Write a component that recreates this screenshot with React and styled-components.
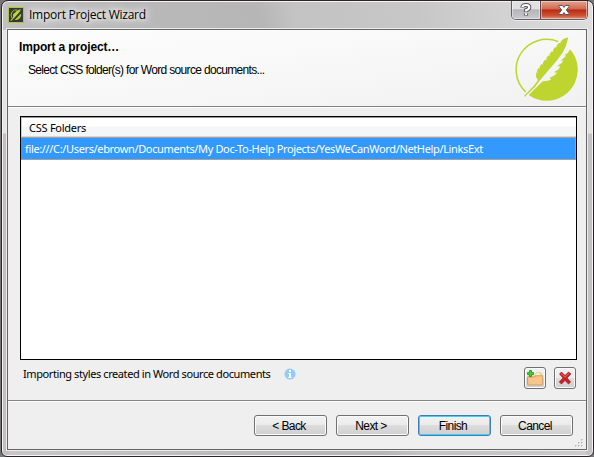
import React from "react";
import styled, { createGlobalStyle, css } from "styled-components";

const GlobalStyle = createGlobalStyle`
  * { box-sizing: border-box; }
  body { margin: 0; background: #777; overflow: hidden; }
`;

const Window = styled.main`
  width: 593px;
  height: 457px;
  padding: 0 5px 6px 5px;
  margin-left: 1px;
  display: flex;
  flex-direction: column;
  border: 1px solid #292529;
  border-radius: 7px 7px 6px 6px;
  box-shadow: inset 0 0 0 1px #f5f3f3;
  background:
    linear-gradient(180deg, #e7e4e4 0 103px, #c3bfbf 104px 100%) 0 29px / 7px 100% no-repeat,
    linear-gradient(180deg, #e5e3e3 0 103px, #c3c1c1 104px 100%) 100% 29px / 7px 100% no-repeat,
    linear-gradient(74deg, #c6c6c6 0 5%, #b9b9b9 35%, #b6b6b6 53%, #c3c3c3 58%, #c7c7c7 75%, #dedede 100%);
  font: 11px/14px "Noto Sans", sans-serif;
  color: #000;
`;

const TitleBar = styled.header`
  height: 28px;
  flex: none;
  display: flex;
  align-items: flex-start;
`;

const Title = styled.h1`
  margin: 4px 0 0 5px;
  font: 12px/20px "Open Sans", sans-serif;
  letter-spacing: -0.26px;
  text-shadow: 0 0 5px #fff, 0 0 9px #fff, 0 0 12px #fff;
`;

const AppIcon = styled.svg`
  width: 16px;
  height: 16px;
  margin: 6px 0 0 1px;
  flex: none;
`;

const Controls = styled.div`
  display: flex;
  margin-left: auto;
  height: 19px;
  border: 1px solid #625f64;
  border-top: 0;
  border-radius: 0 0 5px 5px;
  box-shadow: 0 1px 0 #eee;
  overflow: hidden;
`;

const Control = styled.button`
  width: ${({ $close }) => ($close ? 47 : 28)}px;
  height: 18px;
  padding: 0;
  border: 0;
  display: grid;
  place-items: center;
  box-shadow: inset 0 0 0 1px #ffffff70;
  background: linear-gradient(#e1e0e1 0 45%, #b5b4b7 48%, #cacacd);
  ${({ $close }) => $close && css`
    border-left: 1px solid #69404a;
    background: linear-gradient(#e3a38f 0, #d2674e 45%, #ba2b14 49%, #cc5031 80%, #df947a);
  `}
`;

const Client = styled.section`
  height: 421px;
  width: 580px;
  display: flex;
  flex-direction: column;
  border: 1px solid #656565;
  outline: 1px solid #eeeded;
  background: #efefef;
`;

const Intro = styled.div`
  height: 77px;
  flex: none;
  display: flex;
  justify-content: space-between;
  border-bottom: 1px solid #848484;
  background: linear-gradient(172deg, #fdfdfd, #f9f9f9 40%, #f1f1f1);
  font-family: "Liberation Sans", sans-serif;
`;

const IntroText = styled.div`padding: 10px 0 0 11px;`;

const Heading = styled.h2`
  margin: 0;
  font: bold 12px/14px "Liberation Sans", sans-serif;
  letter-spacing: -0.15px;
`;

const Description = styled.p`
  margin: 9px 0 0 9px;
  font-size: 12px;
  line-height: 14px;
  letter-spacing: -0.68px;
  word-spacing: 0.1px;
`;

const Logo = styled.svg`
  width: 72px;
  height: 72px;
  margin: 3px 4px 0 0;
`;

const Body = styled.div`
  height: 294px;
  flex: none;
  padding: 8px 10px 0 12px;
  border-top: 1px solid #fff;
  border-bottom: 1px solid #858585;
`;

const FolderList = styled.div`
  width: 557px;
  height: 244px;
  border: 1px solid #000;
  background: #fff;
`;

const ListHeader = styled.div`
  height: 20px;
  padding: 3px 0 0 7px;
  border-top: 1px solid #999;
  border-left: 1px solid #ccc;
  border-bottom: 1px solid #d5d5d5;
  background: linear-gradient(#fff 0 8px, #f5f6f7 9px);
  letter-spacing: -0.25px;
  line-height: 13px;
`;

const FolderRow = styled.div`
  height: 23px;
  padding: 4px 0 0 4px;
  border: 1px solid #a5a29d;
  border-width: 1px 1px 1px 0;
  background: #3399ff;
  color: #fff;
  letter-spacing: -0.35px;
  white-space: nowrap;
`;

const Tools = styled.div`
  display: flex;
  align-items: flex-start;
  width: 557px;
  padding: 7px 1px 0 3px;
`;

const Status = styled.span`
  line-height: 14px;
  letter-spacing: -0.41px;
  white-space: nowrap;
`;

const Info = styled.svg`
  width: 12px;
  height: 12px;
  margin: 1px 0 0 14px;
  flex: none;
`;

const ToolButtons = styled.div`
  margin-left: auto;
  display: flex;
  gap: 8px;
`;

const buttonFace = css`
  padding: 0;
  border: 1px solid #707070;
  border-radius: 3px;
  box-shadow: inset 0 0 0 1px #fbfbfb;
  background: linear-gradient(#f2f2f2, #ebebeb 48%, #dddddd 50%, #cfcfcf);
`;

const ToolButton = styled.button`
  ${buttonFace}
  width: 22px;
  height: 22px;
  display: grid;
  place-items: center;
`;

const Footer = styled.footer`
  height: 48px;
  flex: none;
  position: relative;
  display: flex;
  justify-content: flex-end;
  gap: 9px;
  padding: 13px 13px 0 0;
  border-top: 1px solid #fff;
`;

const WizardButton = styled.button`
  ${buttonFace}
  width: 73px;
  height: 21px;
  padding: 1px 3px 0 0;
  font: 12px/17px "Liberation Sans", sans-serif;
  letter-spacing: -0.6px;
  ${({ $primary }) => $primary && css`
    border-color: #3c7fb1;
    box-shadow: inset 0 0 0 1px #43cff5;
  `}
`;

const Grip = styled.svg`
  position: absolute;
  right: 2px;
  bottom: 1px;
  width: 10px;
  height: 10px;
`;

const gripDots = [[7, 1], [4, 4], [7, 4], [1, 7], [4, 7], [7, 7]];
const actions = [
  { label: "< Back" },
  { label: "Next >" },
  { label: "Finish", primary: true },
  { label: "Cancel" },
];

export default function App() {
  return (
    <>
      <GlobalStyle />
      <Window>
        <TitleBar>
          <AppIcon viewBox="0 0 16 16">
            <path fill="#35383a" stroke="#b0c52f" d="M.5.5h15v15H.5z" />
            <path fill="none" stroke="#a9bd2f" d="M9.5 3A5.2 5.2 0 0 0 4 11" />
            <path fill="#b5cc32" d="M13 6.4A5.5 5.5 0 0 1 6.6 13Z" />
            <path fill="#c3d93a" d="M13 2 11.5 5 8 9 3 14l-.6-.6L5.2 10l-.2-2.5L9 3.8Z" />
          </AppIcon>
          <Title>Import Project Wizard</Title>
          <Controls>
            <Control aria-label="Help">
              <svg width="12" height="16" viewBox="0 0 12 16" fill="none">
                <path stroke="#54545d" strokeWidth="4.2" d="M2.5 5.5V5Q2.5 3 6 3t3.2 2.4Q9.2 7 6 8.3V10M6 11.5v2" />
                <path stroke="#fff" strokeWidth="2.2" d="M2.5 5V4.8Q2.5 3 6 3t3.2 2.4Q9.2 7 6 8.3V9.5M6 11.3v1.6" />
              </svg>
            </Control>
            <Control $close aria-label="Close">
              <svg width="12" height="12" viewBox="0 0 12 12">
                <path fill="#fff" stroke="#575463" d="M1 1.5h3.5L6 3.4l1.5-1.9H11v1L8.3 6l2.7 3.5v1H7.5L6 8.6l-1.5 1.9H1v-1L3.7 6 1 2.5z" />
              </svg>
            </Control>
          </Controls>
        </TitleBar>
        <Client>
          <Intro>
            <IntroText>
              <Heading>Import a project…</Heading>
              <Description>Select CSS folder(s) for Word source documents...</Description>
            </IntroText>
            <Logo viewBox="0 0 216 216">
              <path fill="none" stroke="#bed52f" strokeWidth="4.5" d="M145 26A91.5 91.5 0 0 0 47 177" />
              <path fill="#bed52f" d="M180 49A93 93 0 0 1 110.5 203.5A93 93 0 0 1 56 186L98 145 114 143 124 139 118 135 134 127 141 119 132 118 147 108 150 100 141 100 156 89 160 82 151 84 165 72 168 66 161 68 174 59Z" />
              <g transform="matrix(.924 0 0 1 1.3 2)">
                <path fill="#bed52f" d="M188 11Q180 14 173 15L164 23l-2 6-4-2-9 10 1 5-5-2-7 10 1 5-5-2-7 9 1 5-5-2-7 10 2 5-6-2-7 10 2 5-6-2-7 9 3 5-6-2-5 9 4 5-6-1-1 13 6 11-13 16-32 31 3 2 32-28 15-19L152 79 169 57 180 38Z" />
              </g>
            </Logo>
          </Intro>
          <Body>
            <FolderList>
              <ListHeader>CSS Folders</ListHeader>
              <FolderRow>file:///C:/Users/ebrown/Documents/My Doc-To-Help Projects/YesWeCanWord/NetHelp/LinksExt</FolderRow>
            </FolderList>
            <Tools>
              <Status>Importing styles created in Word source documents</Status>
              <Info viewBox="0 0 12 12">
                <circle cx="6" cy="6" r="5.5" fill="#94cbfc" />
                <path fill="#fff" d="M5 2h2v2H5zM4.5 5H7v4h.7v1H4.3V9H5V6h-.5z" />
              </Info>
              <ToolButtons>
                <ToolButton aria-label="Add folder">
                  <svg width="18" height="18" viewBox="0 0 18 18">
                    <path fill="#f8e981" stroke="#d2b75f" strokeWidth=".7" d="M2 7h7l1-3h5l1 2v9H2z" />
                    <path fill="#fff" d="M9.5 4.5h4v1h-4z" />
                    <path fill="#f7c58d" stroke="#c68b4d" strokeWidth=".7" d="M1.5 8h7.2l1-1.2h7v8.4q0 .8-.8.8H2.5q-.8 0-.8-.8z" />
                    <path fill="#45d02f" stroke="#12970e" strokeWidth=".8" d="M3.5 1.5h2v2h2v2h-2v2h-2v-2h-2v-2h2z" />
                  </svg>
                </ToolButton>
                <ToolButton aria-label="Remove folder">
                  <svg width="14" height="14" viewBox="0 0 14 14">
                    <path fill="#ca2127" stroke="#981018" strokeWidth=".6" d="m1.5 3 2-2L7 4.5 10.5 1 13 3 9 7l3.7 4-2.2 2L7 9.4 3.5 13 1.2 11 5 7z" />
                    <path fill="none" stroke="#ef6864" d="m3 2.5 4 3.7 4-3.8" />
                  </svg>
                </ToolButton>
              </ToolButtons>
            </Tools>
          </Body>
          <Footer>
            {actions.map(({ label, primary }) => (
              <WizardButton key={label} $primary={primary}>{label}</WizardButton>
            ))}
            <Grip viewBox="0 0 10 10">
              {gripDots.map(([x, y]) => (
                <g key={`${x}-${y}`}>
                  <path fill="#fff" d={`M${x + 1} ${y + 1}h1v1h-1z`} />
                  <path fill="#b6b6b6" d={`M${x} ${y}h1.5v1.5h-1.5z`} />
                </g>
              ))}
            </Grip>
          </Footer>
        </Client>
      </Window>
    </>
  );
}
